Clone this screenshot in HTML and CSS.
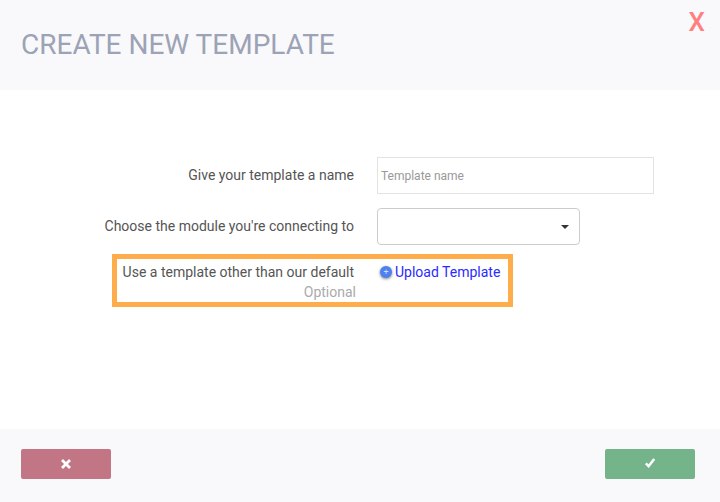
FILE: index.html
```html
<!DOCTYPE html>
<html lang="en">
<head>
    <meta charset="UTF-8">
    <meta name="viewport" content="width=device-width, initial-scale=1">
    <title>Create new template</title>
    <link rel="stylesheet" href="styles.css">
</head>
<body>
    <div class="modal">
        <div class="modal-header">
            <h2>CREATE NEW TEMPLATE</h2>
            <span class="close">X</span>
        </div>

        <div class="modal-body">
            <div class="form-row row-name">
                <label for="templateName">Give your template a name</label>
                <input type="text" id="templateName" placeholder="Template name">
            </div>
            <div class="form-row row-module">
                <label>Choose the module you're connecting to</label>
                <div class="select-box"><span class="caret"></span></div>
            </div>
            <div class="highlight">
                <div class="upload-label">
                    <div class="upload-title">Use a template other than our default</div>
                    <div class="optional">Optional</div>
                </div>
                <a class="upload-link" href="#"><span class="plus-icon">+</span>Upload Template</a>
            </div>
        </div>

        <div class="modal-footer">
            <button class="btn btn-cancel">
                <svg width="10" height="10" viewBox="0 0 10 10"><path d="M1 1L9 9M9 1L1 9" stroke="#fff" stroke-width="2.8" fill="none"/></svg>
            </button>
            <button class="btn btn-ok">
                <svg class="check" width="10" height="10" viewBox="0 0 10 10"><path d="M0.8 5.4L3.6 8.2L9.2 1" stroke="#fff" stroke-width="2.5" fill="none"/></svg>
            </button>
        </div>
    </div>
</body>
</html>
```

FILE: styles.css
```css
* {
    box-sizing: border-box;
}

body {
    margin: 0;
    font-family: Roboto, "Liberation Sans", sans-serif;
    font-size: 14px;
    color: #555;
    background-color: #fff;
}

.modal {
    width: 720px;
    height: 502px;
    display: flex;
    flex-direction: column;
}

.modal-header {
    height: 90px;
    background-color: #f9f9fb;
    padding: 0 15px 0 21px;
    display: flex;
    justify-content: space-between;
}

.modal-header h2 {
    margin: 28px 0 0;
    font-size: 28px;
    line-height: 33px;
    font-weight: 400;
    color: #9ca3b6;
}

.close {
    margin-top: 7px;
    font-size: 26px;
    line-height: 30px;
    font-weight: 500;
    color: #ff8080;
}

.modal-body {
    flex: 1;
    padding-top: 67px;
}

.form-row {
    display: flex;
    align-items: center;
}

.form-row label {
    width: 354px;
    padding-bottom: 2px;
    text-align: right;
    margin-right: 23px;
}

.row-name input {
    width: 277px;
    height: 37px;
    padding: 0 3px;
    border: 1px solid #e3e3e3;
    font-family: inherit;
    font-size: 12px;
    outline: none;
}

.row-name input::placeholder {
    color: #999;
}

.row-module {
    margin-top: 14px;
}

.select-box {
    width: 203px;
    height: 37px;
    border: 1px solid #ccc;
    border-radius: 4px;
    display: flex;
    align-items: center;
    justify-content: flex-end;
    padding-right: 10px;
}

.caret {
    width: 0;
    height: 0;
    border-top: 4px solid #333;
    border-left: 4px solid transparent;
    border-right: 4px solid transparent;
}

.highlight {
    width: 401px;
    height: 53px;
    margin: 9px 0 0 112px;
    border: 5px solid #ffad4a;
    display: flex;
}

.upload-label {
    width: 239px;
    text-align: right;
    padding-top: 3px;
    line-height: 20px;
}

.upload-title {
    padding-right: 2px;
}

.optional {
    color: #aaa;
}

.upload-link {
    margin-left: 24px;
    padding-top: 3px;
    line-height: 20px;
    color: #2a2aff;
    text-decoration: none;
    display: flex;
    align-items: flex-start;
}

.plus-icon {
    width: 12px;
    height: 12px;
    margin: 4px 3px 0 0;
    border-radius: 50%;
    background-color: #4d80f0;
    box-shadow: 0 1px 3px rgba(0, 0, 0, 0.5);
    color: #cfdcff;
    font-size: 9px;
    line-height: 12px;
    text-align: center;
}

.modal-footer {
    height: 73px;
    background-color: #f9f9fb;
    padding: 20px 25px 0 21px;
    display: flex;
    justify-content: space-between;
    align-items: flex-start;
}

.btn {
    width: 90px;
    height: 30px;
    border: 0;
    border-radius: 2px;
    display: flex;
    align-items: center;
    justify-content: center;
}

.btn-cancel {
    background-color: #c17585;
}

.btn-ok {
    background-color: #75b48b;
}

.check {
    margin-bottom: 2px;
}
```
